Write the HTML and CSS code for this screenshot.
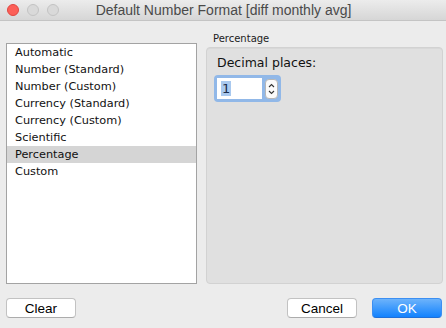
FILE: index.html
```html
<!DOCTYPE html>
<html lang="en">
<head>
    <meta charset="UTF-8">
    <title>Default Number Format</title>
    <link rel="stylesheet" href="styles.css">
</head>
<body>
    <div class="window">
        <div class="titlebar">
            <div class="lights">
                <span class="light close"></span>
                <span class="light"></span>
                <span class="light"></span>
            </div>
            <div class="title">Default Number Format [diff monthly avg]</div>
        </div>

        <div class="main">
            <ul class="format-list">
                <li>Automatic</li>
                <li>Number (Standard)</li>
                <li>Number (Custom)</li>
                <li>Currency (Standard)</li>
                <li>Currency (Custom)</li>
                <li>Scientific</li>
                <li class="selected">Percentage</li>
                <li>Custom</li>
            </ul>

            <div class="format-options">
                <div class="group-label">Percentage</div>
                <div class="group-box">
                    <div class="field-label">Decimal places:</div>
                    <div class="spinner">
                        <div class="spinner-input"><span class="sel">1</span></div>
                        <div class="spinner-buttons">
                            <svg width="11" height="18" viewBox="0 0 11 18">
                                <path d="M3 7 L5.5 4.5 L8 7" fill="none" stroke="#333" stroke-width="1.1"/>
                                <path d="M3 11 L5.5 13.5 L8 11" fill="none" stroke="#333" stroke-width="1.1"/>
                            </svg>
                        </div>
                    </div>
                </div>
            </div>
        </div>

        <div class="footer">
            <button class="btn">Clear</button>
            <div class="footer-right">
                <button class="btn">Cancel</button>
                <button class="btn primary">OK</button>
            </div>
        </div>
    </div>
</body>
</html>
```

FILE: styles.css
```css
* {
    margin: 0;
    padding: 0;
    box-sizing: border-box;
}
body {
    width: 446px;
    height: 328px;
    background: #ececec;
    font-family: "DejaVu Sans", sans-serif;
    overflow: hidden;
}
.window {
    display: flex;
    flex-direction: column;
    height: 328px;
}
.titlebar {
    height: 21px;
    display: flex;
    align-items: center;
    background: linear-gradient(#ececec, #d6d6d6);
    border-bottom: 1px solid #c4c4c4;
}
.lights {
    display: flex;
    gap: 8px;
    padding-left: 7px;
}
.light {
    width: 12px;
    height: 12px;
    border-radius: 50%;
    background: #d9d9d9;
    border: 1px solid #c3c3c3;
}
.light.close {
    background: #fc5f57;
    border-color: #df4741;
}
.title {
    flex: 1;
    text-align: center;
    font-family: "Liberation Sans", sans-serif;
    font-size: 14px;
    color: #4a4a4a;
    margin-right: 58px;
}
.main {
    display: flex;
    gap: 9px;
    padding: 10px 3px 0 6px;
    height: 263px;
}
.format-list {
    list-style: none;
    width: 191px;
    margin-top: 12px;
    background: #fff;
    border: 1px solid #a3a3a3;
    font-size: 11.3px;
    color: #111;
}
.format-list li {
    height: 17px;
    line-height: 17px;
    padding-left: 8px;
}
.format-list li.selected {
    background: #d5d5d5;
}
.format-options {
    flex: 1;
    display: flex;
    flex-direction: column;
}
.group-label {
    height: 16px;
    font-size: 10px;
    color: #222;
    padding-left: 7px;
    line-height: 16px;
}
.group-box {
    flex: 1;
    background: #e0e0e0;
    border: 1px solid #d2d2d2;
    border-radius: 4px;
    box-shadow: inset 0 1px 0 #d8d8d8;
    padding: 6px 0 0 10px;
}
.field-label {
    font-size: 12.5px;
    color: #111;
    height: 18px;
    line-height: 18px;
}
.spinner {
    display: inline-flex;
    align-items: center;
    gap: 3px;
    margin-top: 3px;
    margin-left: -3px;
    padding: 3px;
    border-radius: 4px;
    background: #91b8e8;
}
.spinner-input {
    width: 45px;
    height: 21px;
    background: #fff;
    font-size: 13px;
    line-height: 21px;
    padding-left: 4px;
}
.sel {
    background: #a9c9ef;
    color: #1b2c4a;
    padding: 0 1px;
}
.spinner-buttons {
    width: 13px;
    height: 20px;
    background: #fbfbfb;
    border: 1px solid #b7b7b7;
    border-radius: 4px;
    display: flex;
    align-items: center;
    justify-content: center;
}
.footer {
    display: flex;
    justify-content: space-between;
    padding: 14px 4px 0 6px;
}
.footer-right {
    display: flex;
    gap: 15px;
}
.btn {
    width: 70px;
    height: 20px;
    font-family: "Liberation Sans", sans-serif;
    font-size: 13.5px;
    color: #000;
    background: #fff;
    border: 1px solid #c2c2c2;
    border-bottom-color: #acacac;
    border-radius: 4px;
}
.btn.primary {
    color: #fff;
    background: linear-gradient(#6db3fb, #1282fe);
    border-color: #3c8ff2 #3c8ff2 #1f6fd8;
}
```
